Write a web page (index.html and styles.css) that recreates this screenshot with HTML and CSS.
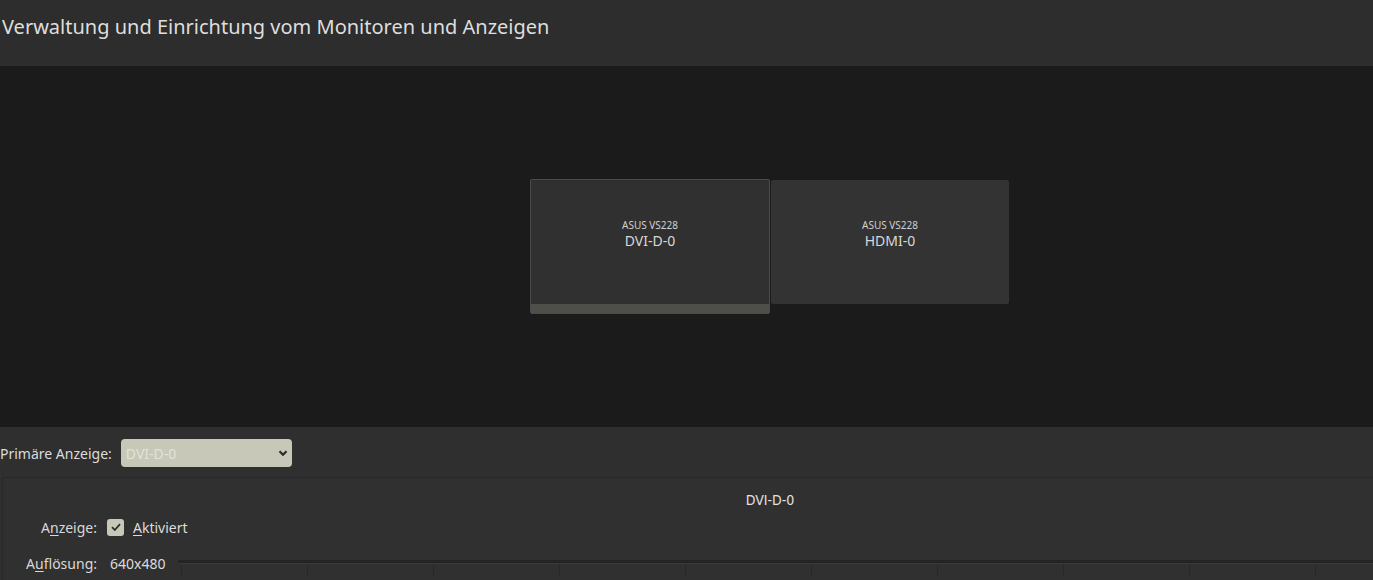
FILE: index.html
```html
<!DOCTYPE html>
<html lang="de">
<head>
  <meta charset="UTF-8">
  <title>Anzeigen</title>
  <link rel="stylesheet" href="styles.css">
</head>
<body>
  <header class="title-bar">
    <h1>Verwaltung und Einrichtung vom Monitoren und Anzeigen</h1>
  </header>

  <div class="canvas">
    <div class="outputs">
      <div class="output primary">
        <div class="output-body">
          <span class="model">ASUS VS228</span>
          <span class="name">DVI-D-0</span>
        </div>
        <div class="output-bar"></div>
      </div>
      <div class="output">
        <div class="output-body">
          <span class="model">ASUS VS228</span>
          <span class="name">HDMI-0</span>
        </div>
      </div>
    </div>
  </div>

  <div class="settings">
    <div class="primary-row">
      <label for="primary">Primäre Anzeige:</label>
      <div class="select">
        <span>DVI-D-0</span>
        <svg width="12" height="12" viewBox="0 0 12 12"><path d="M2.5 4.2 6 7.7 9.5 4.2" fill="none" stroke="#2a2a2a" stroke-width="2.2"/></svg>
      </div>
    </div>

    <div class="panel">
      <div class="panel-title">DVI-D-0</div>
      <div class="field">
        <span class="field-label">A<u>n</u>zeige:</span>
        <span class="check">
          <svg width="12" height="12" viewBox="0 0 12 12"><path d="M2 6.2 4.8 9 10 3.2" fill="none" stroke="#2e2e2e" stroke-width="1.8"/></svg>
        </span>
        <span class="check-label"><u>A</u>ktiviert</span>
      </div>
      <div class="field">
        <span class="field-label">A<u>u</u>flösung:</span>
        <span class="value">640x480</span>
        <div class="slider">
          <div class="groove"></div>
          <div class="ticks">
            <i></i><i></i><i></i><i></i><i></i><i></i><i></i><i></i><i></i><i></i>
          </div>
        </div>
      </div>
    </div>
  </div>
</body>
</html>
```

FILE: styles.css
```css
body {
  margin: 0;
  width: 1373px;
  height: 580px;
  overflow: hidden;
  background-color: #2f2f2f;
  color: #dcdcdc;
  font-family: "Noto Sans", "Open Sans", sans-serif;
  font-size: 14px;
}

.title-bar {
  height: 66px;
  background-color: #2d2d2d;
  display: flex;
  align-items: center;
  padding-left: 2px;
}

.title-bar h1 {
  margin: 0 0 13px;
  font-size: 20px;
  font-weight: normal;
  color: #dedede;
}

.canvas {
  height: 361px;
  background-color: #1b1b1b;
  position: relative;
}

.outputs {
  position: absolute;
  left: 530px;
  top: 113px;
  display: flex;
  align-items: flex-start;
  gap: 1px;
}

.output {
  width: 238px;
  margin-top: 1px;
  background-color: #333333;
  border-radius: 2px;
}

.output.primary {
  margin-top: 0;
  border: 1px solid #4b4b4b;
  background-color: #303030;
}

.output-body {
  height: 124px;
  display: flex;
  flex-direction: column;
  align-items: center;
  padding-top: 38px;
  box-sizing: border-box;
}

.output-bar {
  height: 9px;
  background-color: #4f4f4a;
}

.model {
  font-size: 10px;
  color: #d0d0d0;
  line-height: 14px;
}

.name {
  font-size: 14px;
  color: #d8d8d8;
  line-height: 18px;
}

.settings {
  padding-top: 12px;
}

.primary-row {
  display: flex;
  align-items: center;
  height: 28px;
}

.primary-row label {
  margin-right: 9px;
  color: #dcdcdc;
}

.select {
  width: 171px;
  height: 28px;
  box-sizing: border-box;
  background-color: #c8c8b9;
  border-radius: 4px;
  display: flex;
  align-items: center;
  justify-content: space-between;
  padding: 0 3px 0 5px;
  color: #e2e2d8;
  font-size: 14px;
}

.panel {
  margin: 10px 0 0 2px;
  height: 120px;
  box-sizing: border-box;
  border-top: 1px solid #272727;
  border-left: 1px solid #282828;
  background-color: #303030;
  overflow: hidden;
}

.panel-title {
  text-align: center;
  font-family: "DejaVu Sans Condensed", "DejaVu Sans", sans-serif;
  font-size: 14px;
  color: #e2e2e2;
  padding: 14px 0 0 164px;
  height: 19px;
}

.field {
  display: flex;
  align-items: center;
  height: 26px;
  margin-top: 3px;
}

.field + .field {
  margin-top: 10px;
}

.field-label {
  width: 94px;
  flex-shrink: 0;
  text-align: right;
  color: #d8d8d8;
}

.field u,
.check-label u {
  text-underline-offset: 2px;
}

.check {
  margin-left: 10px;
  width: 17px;
  height: 17px;
  border-radius: 3px;
  background-color: #c8c8b9;
  display: flex;
  align-items: center;
  justify-content: center;
}

.check-label {
  margin-left: 9px;
  color: #dcdcdc;
}

.value {
  margin-left: 13px;
  flex-shrink: 0;
  color: #dcdcdc;
}

.slider {
  flex: 1;
  min-width: 0;
  margin-left: 13px;
  align-self: flex-start;
  padding-top: 10px;
  overflow: hidden;
}

.groove {
  height: 3px;
  background-color: #242424;
  border-bottom: 1px solid #3a3a3a;
  border-radius: 2px 0 0 2px;
}

.ticks {
  display: flex;
  padding-left: 3px;
  margin-top: 1px;
}

.ticks i {
  display: block;
  width: 125px;
  height: 10px;
  border-left: 1px solid #272727;
  flex-shrink: 0;
}
```
